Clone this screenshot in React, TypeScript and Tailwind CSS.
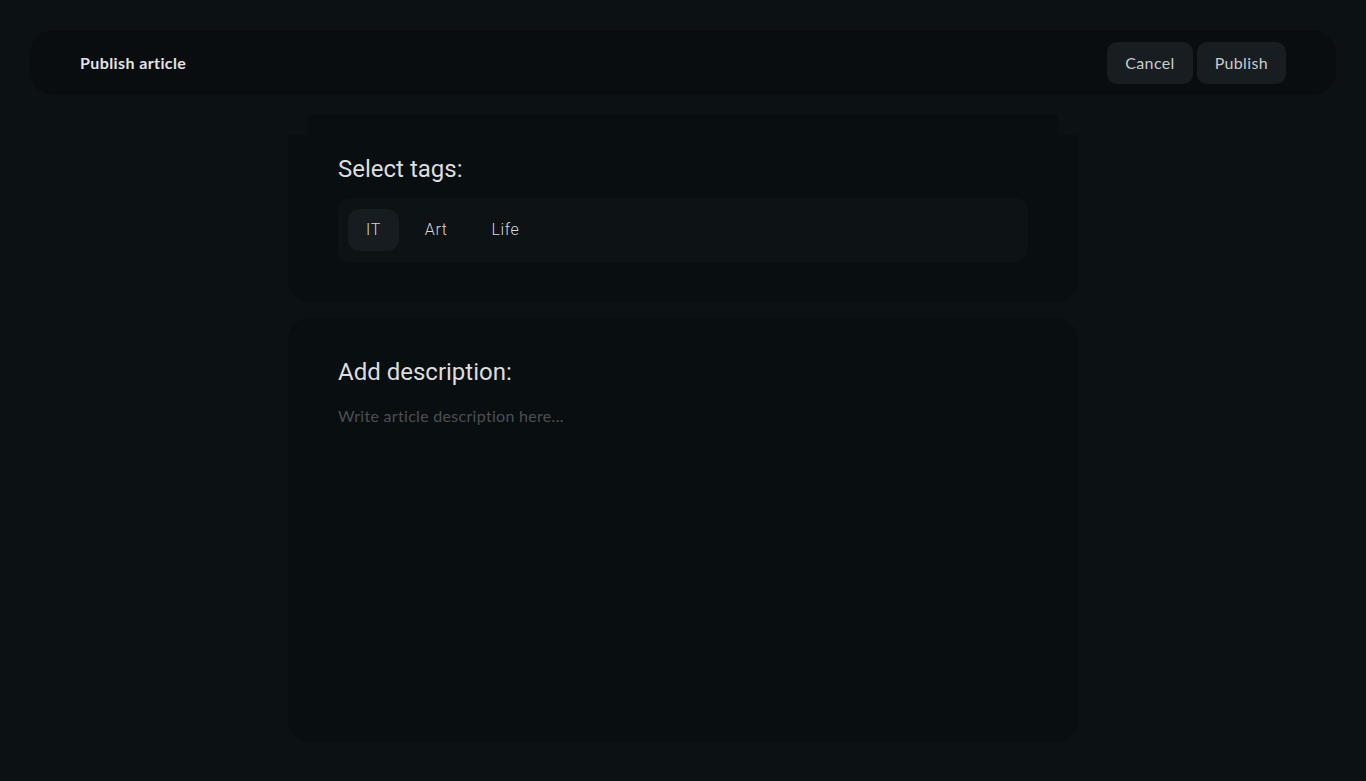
import { useState } from 'react';

const TAGS = ['IT', 'Art', 'Life'];

export default function App() {
  const [selected, setSelected] = useState('IT');
  const [description, setDescription] = useState('');

  return (
    <div className="min-h-screen w-full bg-[#0c1114] px-[30px] pt-[30px] pb-10 font-['Lato',sans-serif] tracking-[0.35px]">
      {/* Top bar */}
      <header className="flex h-[65px] items-center justify-between rounded-[24px] bg-[#090d10] px-[50px]">
        <h1 className="text-[16px] font-bold tracking-[0.4px] text-[#e2e3e4]">Publish article</h1>
        <div className="flex items-center gap-1">
          <button className="h-[42px] rounded-[10px] bg-[#171d20] px-[18px] text-[16px] text-[#c9cbcc]">
            Cancel
          </button>
          <button className="h-[42px] rounded-[10px] bg-[#171d20] px-[18px] text-[16px] text-[#c9cbcc]">
            Publish
          </button>
        </div>
      </header>

      <main className="mx-auto mt-5 flex w-[790px] flex-col gap-4">
        {/* Tags card */}
        <section className="flex flex-col">
          <div className="mx-5 h-5 bg-[#090e11]" />
          <div className="rounded-b-[22px] bg-[#090e11] px-[50px] pt-[20px] pb-10">
            <h2 className="font-['Roboto',sans-serif] text-[24px] leading-[28px] tracking-normal text-[#dcdddd]">
              Select tags:
            </h2>
            <div className="mt-[15px] flex gap-2 rounded-[12px] bg-[#0d1215] px-[10px] py-[11px]">
              {TAGS.map((tag) => (
                <button
                  key={tag}
                  onClick={() => setSelected(tag)}
                  className={`h-[42px] rounded-[12px] px-[18px] font-['Roboto',sans-serif] text-[16px] font-light tracking-[0.6px] text-[#d6d7d8] ${
                    selected === tag ? 'bg-[#161c1f]' : 'bg-transparent'
                  }`}
                >
                  {tag}
                </button>
              ))}
            </div>
          </div>
        </section>

        {/* Description card */}
        <section className="flex h-[424px] flex-col rounded-[22px] bg-[#090e11] px-[50px] pt-10 pb-10">
          <h2 className="font-['Roboto',sans-serif] text-[24px] leading-[28px] tracking-normal text-[#dcdddd]">
            Add description:
          </h2>
          <textarea
            value={description}
            onChange={(e) => setDescription(e.target.value)}
            placeholder="Write article description here..."
            className="mt-[18px] flex-1 resize-none bg-transparent text-[16px] tracking-[0.3px] text-[#cfd0d1] outline-none placeholder:text-[#4b5053]"
          />
        </section>
      </main>
    </div>
  );
}
